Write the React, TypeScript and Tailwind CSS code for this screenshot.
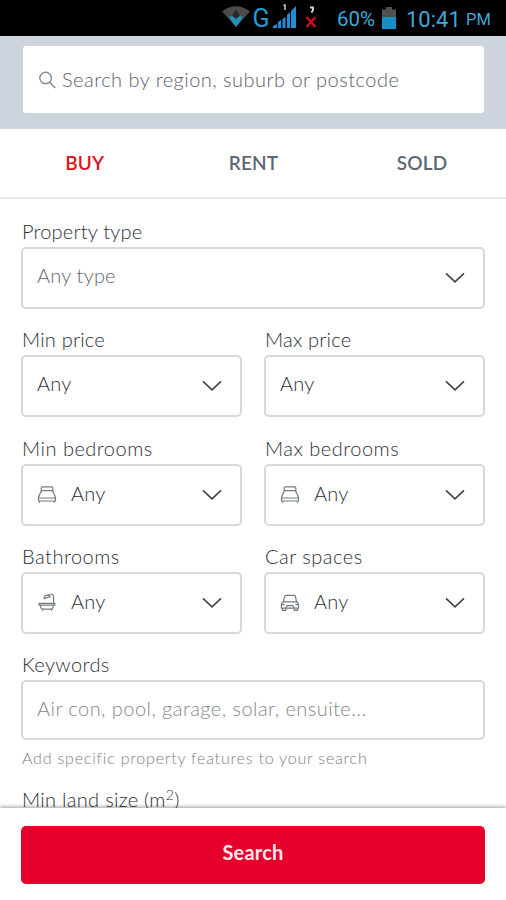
import type { ReactNode } from "react";
import clsx from "clsx";

function BedIcon() {
  return (
    <svg width="20" height="20" viewBox="0 0 20 20" fill="none" stroke="#737c83" strokeWidth="1.2">
      <path d="M4.200 7V3c0-.7.4-1.100 1-1.100h9.600c.6 0 1 .4 1 1.100v4M4.200 5.600h11.600" />
      <path d="M4.200 6.600C3 8.400 1.800 10.600 1.500 13v3h17v-3c-.3-2.400-1.500-4.600-2.700-6.400M1.500 13h17" />
      <path d="M2.600 16v1.800M17.400 16v1.800" />
    </svg>
  );
}

function BathIcon() {
  return (
    <svg width="20" height="20" viewBox="0 0 20 20" fill="none" stroke="#737c83" strokeWidth="1.2">
      <path d="M2 10.400h15.800v1.800H2zM3.400 12.200c.2 2.800 1.200 4 3 4h7c1.800 0 2.800-1.200 3-4" />
      <path d="M5.400 16v1.800M14.600 16v1.800M16.600 10.400V4c0-1.900-1.100-3-2.600-3-1.400 0-2.500.5-3.200 1.300" />
      <path d="M7.200 5.600c-.2-2 1.300-3.400 3.200-3.400 1.200 0 2.200.5 2.700 1.400z" />
    </svg>
  );
}

function CarIcon() {
  return (
    <svg width="20" height="20" viewBox="0 0 20 20" fill="none" stroke="#737c83" strokeWidth="1.2">
      <path d="M3.400 8.800 4.500 3.900c.3-1.100.9-1.600 1.900-1.600h7.200c1 0 1.600.5 1.900 1.600l1.100 4.900z" />
      <path d="M3.400 8.800C2 9.600 1.400 10.600 1.400 12v3.200h17.200V12c0-1.400-.6-2.400-2-3.200" />
      <path d="M2.400 15.200v2.200h3.400v-2.200M14.200 15.200v2.200h3.400v-2.200M6 15l1-2.400h6l1 2.400M1.600 11.600h3M15.400 11.600h3" />
    </svg>
  );
}

function Chevron() {
  return (
    <svg width="20" height="12" viewBox="0 0 20 12" fill="none" stroke="#3f4347" strokeWidth="1.6">
      <path d="M1 1.400 10 9.800l9-8.400" />
    </svg>
  );
}

const labelClass = "h-[30px] pl-px text-[20px] leading-[28px] font-light text-[#2b3035]";

interface FieldProps {
  label: string;
  value: string;
  icon?: ReactNode;
  muted?: boolean;
}

function SelectField({ label, value, icon, muted }: FieldProps) {
  return (
    <div>
      <div className={clsx(labelClass, icon ? "tracking-[0.500px]" : "tracking-[0.200px]")}>{label}</div>
      <button
        className={clsx(
          "flex h-[62px] w-full items-center rounded-[5px] border-2 border-[#d6d9da] bg-white pr-[18px] pl-[14px] text-left text-[20px] font-light tracking-[0.200px]",
          muted ? "text-[#62696f]" : "text-[#2b3035]",
        )}
      >
        {icon && <span className="mr-[14px] h-5 w-5">{icon}</span>}
        <span className={clsx("flex-1", icon ? "pb-1" : "pb-[7px]")}>{value}</span>
        <Chevron />
      </button>
    </div>
  );
}

function StatusBar() {
  return (
    <div className="flex h-9 items-center bg-black pl-[222px] font-[Roboto] text-[#3fa9d5]">
      <svg width="98" height="36" viewBox="0 0 98 36">
        <path d="M0 11.500Q13.500 1 28 11.500L14 27z" fill="#4b4b4b" />
        <path d="M14 9l4 7-4 4-4-4z" fill="#26292b" />
        <path d="M7 17l3.500-1 3.500 3 3.500-3 3.500 1-7 10z" fill="#2590b9" />
        <text x="30.500" y="26.500" fontSize="25" fill="#2799d8">G</text>
        <path d="M51 28v-2l4-2v4zM56 28v-6l3-2v8zM60.500 28v-9l3-2v11zM65 28V15l3-3v16zM69 28V11l5-5v22z" fill="#1d8fd8" />
        <path d="M61.500 5.500l1.500-.5v5" fill="none" stroke="#ccc" strokeWidth="1.500" />
        <path d="M79.500 17l9 10M88.500 17l-9 10" transform="translate(5)" stroke="#c6131b" strokeWidth="2.400" />
        <path d="M88 7.500h3v2.500l-1.500 2.500" fill="none" stroke="#ddd" strokeWidth="1.800" />
      </svg>
      <span className="ml-[17px] w-[45px] pt-0.5 text-[20.500px]">60%</span>
      <svg width="14" height="22" viewBox="0 0 14 22">
        <path d="M0 2.500h4V0h6v2.500h4V22H0z" fill="#505050" />
        <path d="M0 10h14v12H0z" fill="#1590c7" />
      </svg>
      <span className="ml-[10px] w-[60px] pt-0.5 text-[22px]">10:41</span>
      <span className="pt-[5px] text-[16.500px]">PM</span>
    </div>
  );
}

const tabs = ["BUY", "RENT", "SOLD"];

export default function App() {
  return (
    <div className="flex h-[900px] w-[506px] flex-col overflow-hidden bg-white font-[Lato,sans-serif]">
      <StatusBar />
      <header className="h-[93px] bg-[#ced4de] pt-[10px] pr-[22px] pl-[23px]">
        <div className="flex h-[67px] items-center rounded-[3px] bg-white pl-4 text-[20px] font-light tracking-[0.480px] text-[#5c626a]">
          <svg width="17" height="18" viewBox="0 0 17 18" fill="none" stroke="#858a92" strokeWidth="1.4">
            <circle cx="6.600" cy="7" r="5.800" />
            <path d="M10.800 11.300 16.200 17" />
          </svg>
          <span className="ml-[6px] pb-0.5">Search by region, suburb or postcode</span>
        </div>
      </header>
      <nav className="grid h-[70px] grid-cols-3 border-b-2 border-[#e6e7e8]">
        {tabs.map((tab) => (
          <button
            key={tab}
            className={clsx(
              "pl-px text-[19px] font-semibold tracking-[0.200px]",
              tab === "BUY" ? "text-[#e2101d]" : "text-[#5d6671]",
            )}
          >
            {tab}
          </button>
        ))}
      </nav>
      <main className="h-[609px] px-[21px] pt-[18px]">
        <SelectField label="Property type" value="Any type" muted />
        <div className="mt-[16px] grid grid-cols-2 gap-x-[22px] gap-y-[16.500px]">
          <SelectField label="Min price" value="Any" />
          <SelectField label="Max price" value="Any" />
          <SelectField label="Min bedrooms" value="Any" icon={<BedIcon />} />
          <SelectField label="Max bedrooms" value="Any" icon={<BedIcon />} />
          <SelectField label="Bathrooms" value="Any" icon={<BathIcon />} />
          <SelectField label="Car spaces" value="Any" icon={<CarIcon />} />
        </div>
        <div className={clsx(labelClass, "mt-[16px] tracking-[0.400px]")}>Keywords</div>
        <div className="flex h-[60px] items-center rounded-[5px] border-2 border-[#d6d9da] pb-[5px] pl-[14px] text-[20px] font-light tracking-[0.450px] text-[#85888a]">
          Air con, pool, garage, solar, ensuite...
        </div>
        <div className="h-[36px] pl-px text-[16px] leading-[35px] font-light tracking-[0.800px] text-[#7d8082]">
          Add specific property features to your search
        </div>
        <div className={clsx(labelClass, "mt-[9px] tracking-[0.300px]")}>
          Min land size (m<sup className="text-[14px]">2</sup>)
        </div>
      </main>
      <footer className="relative h-[92px] bg-white px-[21px] pt-[18px] shadow-[0_-1px_4px_rgba(0,0,0,0.4)]">
        <button className="h-[58px] w-full rounded-[5px] bg-[#e4002b] pb-1.5 text-[20px] font-bold tracking-[0.200px] text-[#ffe9ec]">
          Search
        </button>
      </footer>
    </div>
  );
}
